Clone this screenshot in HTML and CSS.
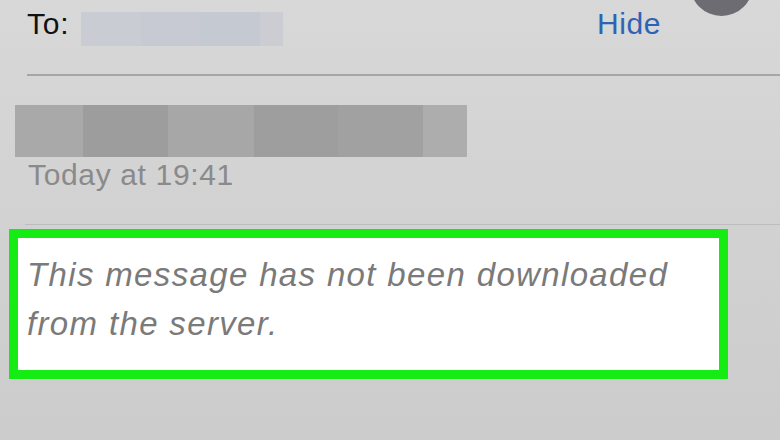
FILE: index.html
```html
<!DOCTYPE html>
<html>
<head>
<meta charset="utf-8">
<link rel="stylesheet" href="styles.css">
</head>
<body>
<div class="screen">
  <div class="header">
    <span class="to">To:</span>
    <div class="field">
      <span class="fs fs1"></span><span class="fs fs2"></span><span class="fs fs3"></span><span class="fs fs4"></span>
    </div>
    <span class="hide">Hide</span>
    <span class="avatar"></span>
  </div>
  <div class="rule"></div>
  <div class="namebar">
    <span class="ns n1"></span><span class="ns n2"></span><span class="ns n3"></span><span class="ns n4"></span><span class="ns n5"></span><span class="ns n6"></span>
  </div>
  <div class="date">Today at 19:41</div>
  <div class="rule2"></div>
  <div class="box">
    <p class="msg">This message has not been downloaded<br>from the server.</p>
  </div>
</div>
</body>
</html>
```
FILE: styles.css
```css
html, body {
  margin: 0;
  padding: 0;
}
body {
  width: 780px;
  height: 440px;
  overflow: hidden;
  background: linear-gradient(#d8d8d8 0%, #d3d3d3 40%, #cccccc 100%);
  font-family: "Liberation Sans", Arial, sans-serif;
}
.screen {
  display: flex;
  flex-direction: column;
  height: 440px;
}
.header {
  display: flex;
  align-items: flex-start;
  padding: 6px 27px 0 27px;
  height: 68px;
  box-sizing: border-box;
}
.to {
  font-size: 30px;
  line-height: 36px;
  color: #111;
  letter-spacing: 0.8px;
}
.field {
  display: flex;
  margin-top: 6px;
  margin-left: 12px;
  width: 202px;
  height: 34px;
}
.fs { flex: 1; height: 100%; }
.fs1 { background: #c9ccd3; }
.fs2 { background: #c7cad2; }
.fs3 { background: #c5c9d1; }
.fs4 { background: #cbcdd2; flex: 0.4; }
.hide {
  margin-left: auto;
  font-size: 30px;
  line-height: 36px;
  color: #2d63b5;
  letter-spacing: 0.6px;
}
.avatar {
  width: 63px;
  height: 63px;
  border-radius: 50%;
  background: #6c6c72;
  margin-top: -53px;
  margin-left: 29px;
  flex: none;
}
.rule {
  margin-left: 27px;
  margin-top: 6px;
  height: 2px;
  background: #a6a6a6;
}
.namebar {
  display: flex;
  margin-top: 29px;
  margin-left: 15px;
  width: 452px;
  height: 52px;
}
.ns { height: 100%; }
.n1 { width: 68px; background: #a9a9a9; }
.n2 { width: 85px; background: #9d9d9d; }
.n3 { width: 86px; background: #a7a7a7; }
.n4 { width: 84px; background: #9e9e9e; }
.n5 { width: 85px; background: #a1a1a1; }
.n6 { width: 44px; background: #adadad; }
.date {
  margin-left: 28px;
  font-size: 30px;
  line-height: 36px;
  color: #8a8a8a;
  letter-spacing: 0.65px;
}
.rule2 {
  margin-top: 31px;
  margin-left: 25px;
  height: 1px;
  background: #bdbdbd;
}
.box {
  margin-top: 4px;
  margin-left: 9px;
  width: 719px;
  height: 150px;
  box-sizing: border-box;
  border: 9px solid #14ec14;
  background: #ffffff;
  padding: 12px 0 0 9px;
}
.msg {
  margin: 0;
  font-style: italic;
  font-size: 33px;
  line-height: 49px;
  letter-spacing: 1.35px;
  color: #7a7a7a;
}
```
